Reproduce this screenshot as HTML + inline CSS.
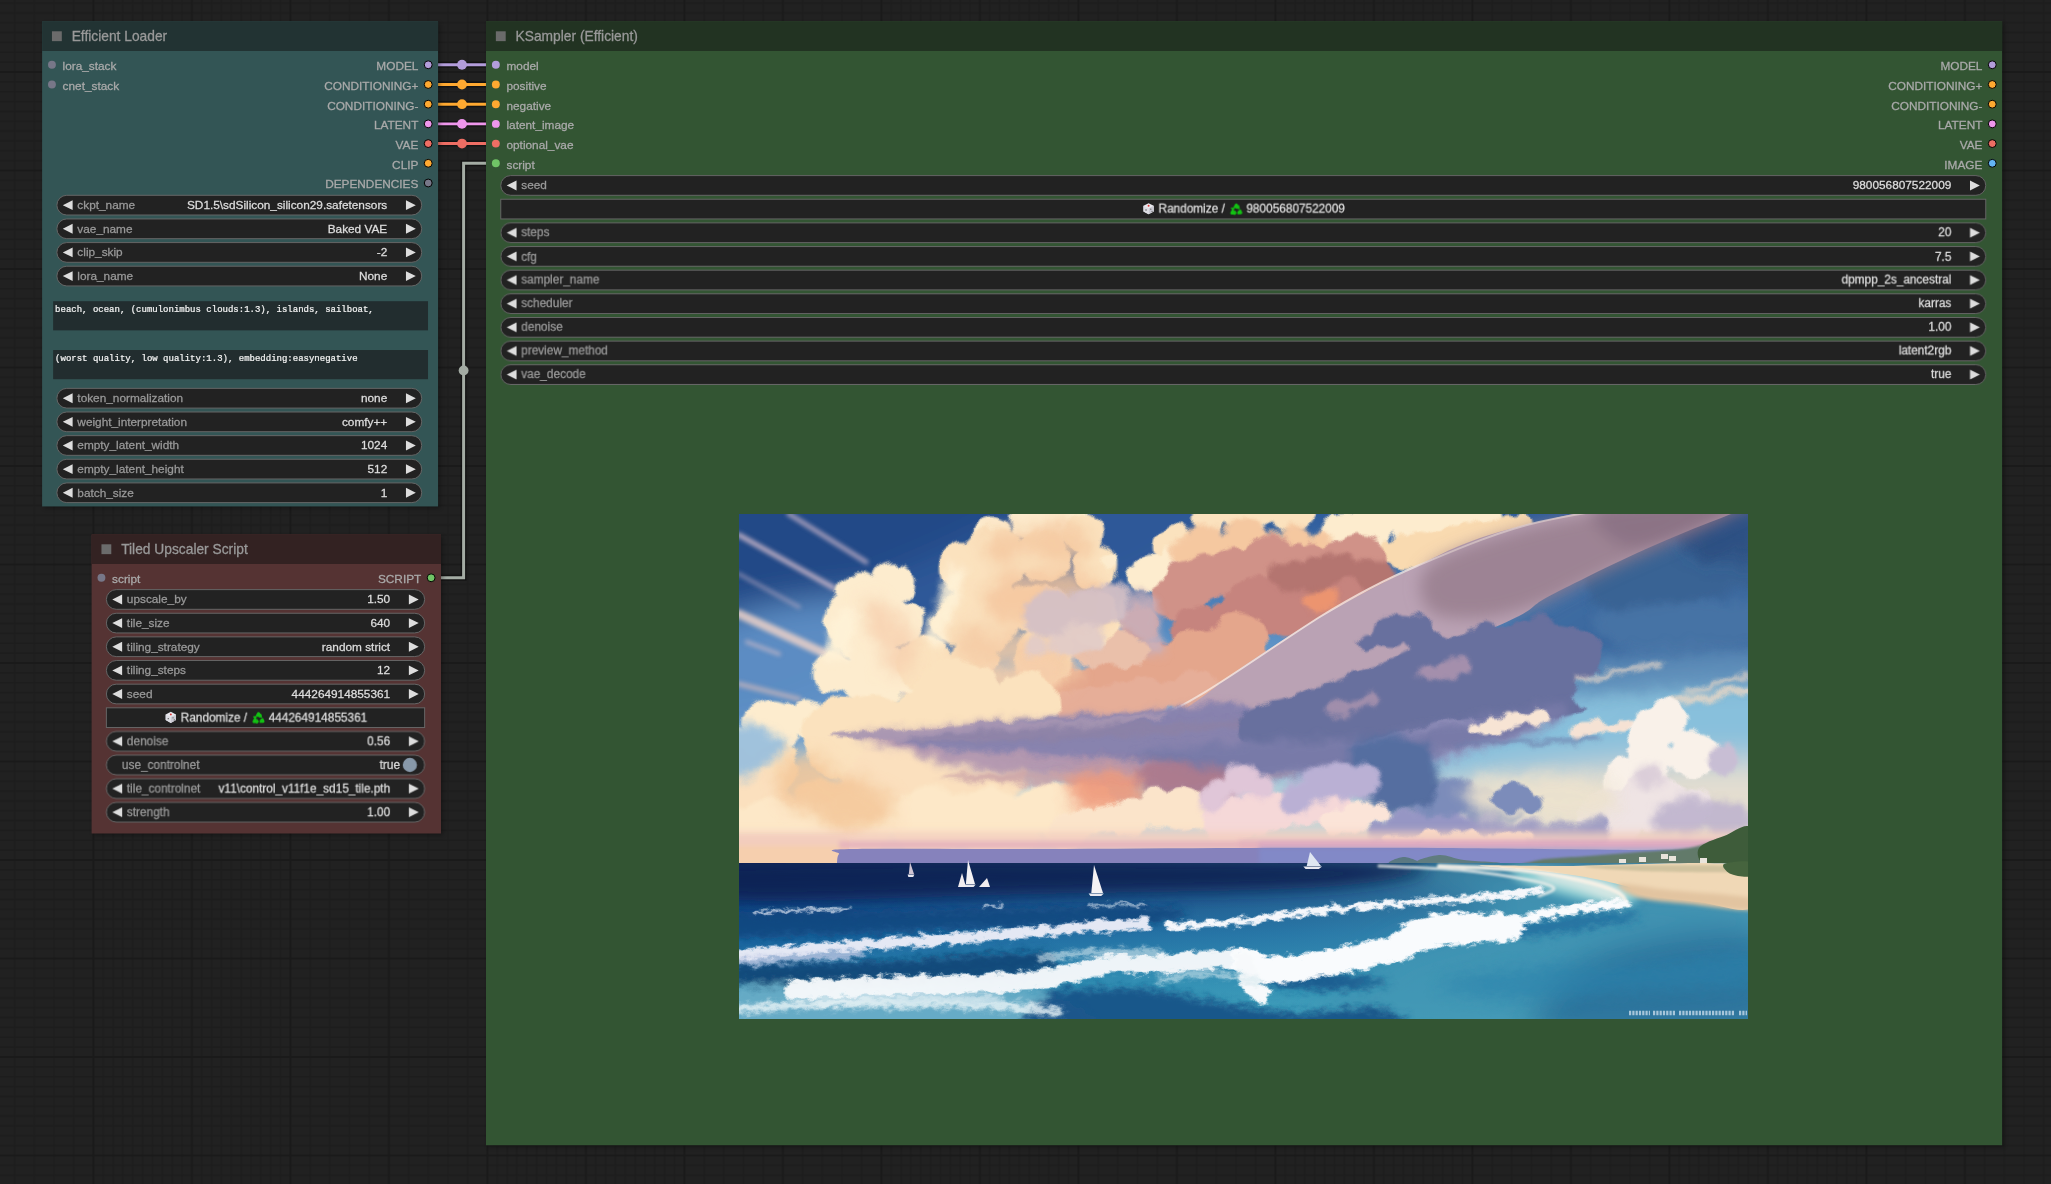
<!DOCTYPE html>
<html lang="en"><head><meta charset="utf-8"><title>ComfyUI - Efficiency Nodes workflow</title>
<style>html,body{margin:0;padding:0;background:#212121;overflow:hidden}svg{display:block;will-change:transform}text{font-family:"Liberation Sans", Arial, sans-serif}.mono{font-family:"Liberation Mono", "DejaVu Sans Mono", monospace}</style>
</head><body>
<svg width="2051" height="1184" viewBox="0 0 2051 1184">
<defs>
<pattern id="grid" width="394" height="98.5" patternUnits="userSpaceOnUse" x="93.4" y="72"><rect width="394" height="98.5" fill="#212121"/><path d="M9.85 0V98.5M19.70 0V98.5M29.55 0V98.5M39.40 0V98.5M49.25 0V98.5M59.10 0V98.5M68.95 0V98.5M78.80 0V98.5M88.65 0V98.5M108.35 0V98.5M118.20 0V98.5M128.05 0V98.5M137.90 0V98.5M147.75 0V98.5M157.60 0V98.5M167.45 0V98.5M177.30 0V98.5M187.15 0V98.5M216.70 0V98.5M236.40 0V98.5M256.10 0V98.5M275.80 0V98.5M315.20 0V98.5M334.90 0V98.5M354.60 0V98.5M374.30 0V98.5M0 9.85H394M0 19.70H394M0 29.55H394M0 39.40H394M0 49.25H394M0 59.10H394M0 68.95H394M0 78.80H394M0 88.65H394" stroke="#1d1d1d" stroke-width="1.6" fill="none"/><path d="M0 0V98.5M98.5 0V98.5M197 0V98.5M295.5 0V98.5M394 0V98.5M0 0H394M0 98.5H394" stroke="#1a1a1a" stroke-width="2" fill="none"/></pattern>
<filter id="sh" x="-5%" y="-5%" width="110%" height="110%"><feGaussianBlur stdDeviation="2"/></filter>
</defs>
<rect width="2051" height="1184" fill="url(#grid)"/>
<path d="M428 64.79L496 64.79" fill="none" stroke="#000" stroke-opacity="0.4" stroke-width="5.91" stroke-linejoin="miter"/><path d="M428 64.79L496 64.79" fill="none" stroke="#B39DDB" stroke-width="2.96" stroke-linejoin="miter"/><circle cx="462" cy="64.79" r="4.92" fill="#B39DDB"/>
<path d="M428 84.49L496 84.49" fill="none" stroke="#000" stroke-opacity="0.4" stroke-width="5.91" stroke-linejoin="miter"/><path d="M428 84.49L496 84.49" fill="none" stroke="#FFA931" stroke-width="2.96" stroke-linejoin="miter"/><circle cx="462" cy="84.49" r="4.92" fill="#FFA931"/>
<path d="M428 104.19L496 104.19" fill="none" stroke="#000" stroke-opacity="0.4" stroke-width="5.91" stroke-linejoin="miter"/><path d="M428 104.19L496 104.19" fill="none" stroke="#FFA931" stroke-width="2.96" stroke-linejoin="miter"/><circle cx="462" cy="104.19" r="4.92" fill="#FFA931"/>
<path d="M428 123.89L496 123.89" fill="none" stroke="#000" stroke-opacity="0.4" stroke-width="5.91" stroke-linejoin="miter"/><path d="M428 123.89L496 123.89" fill="none" stroke="#EE96EC" stroke-width="2.96" stroke-linejoin="miter"/><circle cx="462" cy="123.89" r="4.92" fill="#EE96EC"/>
<path d="M428 143.59L496 143.59" fill="none" stroke="#000" stroke-opacity="0.4" stroke-width="5.91" stroke-linejoin="miter"/><path d="M428 143.59L496 143.59" fill="none" stroke="#EE6E64" stroke-width="2.96" stroke-linejoin="miter"/><circle cx="462" cy="143.59" r="4.92" fill="#EE6E64"/>
<path d="M431 577.79L441 577.79L463.6 577.79L463.6 163.29L486 163.29L496 163.29" fill="none" stroke="#000" stroke-opacity="0.4" stroke-width="5.91" stroke-linejoin="miter"/><path d="M431 577.79L441 577.79L463.6 577.79L463.6 163.29L486 163.29L496 163.29" fill="none" stroke="#a4aca4" stroke-width="2.96" stroke-linejoin="miter"/><circle cx="463.6" cy="370.53999999999996" r="4.92" fill="#a4aca4"/>
<g transform="translate(42.1,51.0) scale(0.985)">
<rect x="0" y="-30" width="402" height="492.4" fill="#000" opacity="0.3" filter="url(#sh)" transform="translate(2,2)"/>
<rect x="0" y="-30" width="402" height="492.4" fill="#355"/>
<rect x="0" y="-30" width="402" height="30" fill="#233"/>
<rect x="10" y="-20" width="10" height="10" fill="#6b6b6b"/>
<text x="30" y="-10" font-size="14" fill="#999" stroke="#999" stroke-width="0.28">Efficient Loader</text>
<circle cx="10" cy="14.0" r="4" fill="#778"/>
<text x="20.8" y="19.4" font-size="12" fill="#AAA" stroke="#AAA" stroke-width="0.28">lora_stack</text>
<circle cx="10" cy="34.0" r="4" fill="#778"/>
<text x="20.8" y="39.4" font-size="12" fill="#AAA" stroke="#AAA" stroke-width="0.28">cnet_stack</text>
<circle cx="392" cy="14.0" r="4" fill="#B39DDB" stroke="#000" stroke-width="1"/>
<text x="382" y="19.4" font-size="12" fill="#AAA" text-anchor="end" stroke="#AAA" stroke-width="0.28">MODEL</text>
<circle cx="392" cy="34.0" r="4" fill="#FFA931" stroke="#000" stroke-width="1"/>
<text x="382" y="39.4" font-size="12" fill="#AAA" text-anchor="end" stroke="#AAA" stroke-width="0.28">CONDITIONING+</text>
<circle cx="392" cy="54.0" r="4" fill="#FFA931" stroke="#000" stroke-width="1"/>
<text x="382" y="59.4" font-size="12" fill="#AAA" text-anchor="end" stroke="#AAA" stroke-width="0.28">CONDITIONING-</text>
<circle cx="392" cy="74.0" r="4" fill="#EE96EC" stroke="#000" stroke-width="1"/>
<text x="382" y="79.4" font-size="12" fill="#AAA" text-anchor="end" stroke="#AAA" stroke-width="0.28">LATENT</text>
<circle cx="392" cy="94.0" r="4" fill="#EE6E64" stroke="#000" stroke-width="1"/>
<text x="382" y="99.4" font-size="12" fill="#AAA" text-anchor="end" stroke="#AAA" stroke-width="0.28">VAE</text>
<circle cx="392" cy="114.0" r="4" fill="#FFA931" stroke="#000" stroke-width="1"/>
<text x="382" y="119.4" font-size="12" fill="#AAA" text-anchor="end" stroke="#AAA" stroke-width="0.28">CLIP</text>
<circle cx="392" cy="134.0" r="4" fill="#778" stroke="#000" stroke-width="1"/>
<text x="382" y="139.4" font-size="12" fill="#AAA" text-anchor="end" stroke="#AAA" stroke-width="0.28">DEPENDENCIES</text>
<rect x="15" y="146.5" width="370.4" height="20" rx="10" ry="10" fill="#222" stroke="#666" stroke-width="1"/>
<path d="M31 151.5L21 156.5L31 161.5Z M369.4 151.5L379.4 156.5L369.4 161.5Z" fill="#DDD"/>
<text x="35.8" y="160.5" font-size="12" fill="#999" stroke="#999" stroke-width="0.28">ckpt_name</text>
<text x="350.4" y="160.5" font-size="12" fill="#DDD" text-anchor="end" stroke="#DDD" stroke-width="0.28">SD1.5\sdSilicon_silicon29.safetensors</text>
<rect x="15" y="170.5" width="370.4" height="20" rx="10" ry="10" fill="#222" stroke="#666" stroke-width="1"/>
<path d="M31 175.5L21 180.5L31 185.5Z M369.4 175.5L379.4 180.5L369.4 185.5Z" fill="#DDD"/>
<text x="35.8" y="184.5" font-size="12" fill="#999" stroke="#999" stroke-width="0.28">vae_name</text>
<text x="350.4" y="184.5" font-size="12" fill="#DDD" text-anchor="end" stroke="#DDD" stroke-width="0.28">Baked VAE</text>
<rect x="15" y="194.5" width="370.4" height="20" rx="10" ry="10" fill="#222" stroke="#666" stroke-width="1"/>
<path d="M31 199.5L21 204.5L31 209.5Z M369.4 199.5L379.4 204.5L369.4 209.5Z" fill="#DDD"/>
<text x="35.8" y="208.5" font-size="12" fill="#999" stroke="#999" stroke-width="0.28">clip_skip</text>
<text x="350.4" y="208.5" font-size="12" fill="#DDD" text-anchor="end" stroke="#DDD" stroke-width="0.28">-2</text>
<rect x="15" y="218.5" width="370.4" height="20" rx="10" ry="10" fill="#222" stroke="#666" stroke-width="1"/>
<path d="M31 223.5L21 228.5L31 233.5Z M369.4 223.5L379.4 228.5L369.4 233.5Z" fill="#DDD"/>
<text x="35.8" y="232.5" font-size="12" fill="#999" stroke="#999" stroke-width="0.28">lora_name</text>
<text x="350.4" y="232.5" font-size="12" fill="#DDD" text-anchor="end" stroke="#DDD" stroke-width="0.28">None</text>
<rect x="11.2" y="254" width="380.6" height="29.6" fill="#222d2f"/>
<text class="mono" x="13.2" y="264.9" font-size="9.15" fill="#f4f4f4" stroke="#f4f4f4" stroke-width="0.22" style="font-family:'Liberation Mono', 'DejaVu Sans Mono', monospace">beach, ocean, (cumulonimbus clouds:1.3), islands, sailboat,</text>
<rect x="11.2" y="303.6" width="380.6" height="29.6" fill="#222d2f"/>
<text class="mono" x="13.2" y="314.5" font-size="9.15" fill="#f4f4f4" stroke="#f4f4f4" stroke-width="0.22" style="font-family:'Liberation Mono', 'DejaVu Sans Mono', monospace">(worst quality, low quality:1.3), embedding:easynegative</text>
<rect x="15" y="342.5" width="370.4" height="20" rx="10" ry="10" fill="#222" stroke="#666" stroke-width="1"/>
<path d="M31 347.5L21 352.5L31 357.5Z M369.4 347.5L379.4 352.5L369.4 357.5Z" fill="#DDD"/>
<text x="35.8" y="356.5" font-size="12" fill="#999" stroke="#999" stroke-width="0.28">token_normalization</text>
<text x="350.4" y="356.5" font-size="12" fill="#DDD" text-anchor="end" stroke="#DDD" stroke-width="0.28">none</text>
<rect x="15" y="366.5" width="370.4" height="20" rx="10" ry="10" fill="#222" stroke="#666" stroke-width="1"/>
<path d="M31 371.5L21 376.5L31 381.5Z M369.4 371.5L379.4 376.5L369.4 381.5Z" fill="#DDD"/>
<text x="35.8" y="380.5" font-size="12" fill="#999" stroke="#999" stroke-width="0.28">weight_interpretation</text>
<text x="350.4" y="380.5" font-size="12" fill="#DDD" text-anchor="end" stroke="#DDD" stroke-width="0.28">comfy++</text>
<rect x="15" y="390.5" width="370.4" height="20" rx="10" ry="10" fill="#222" stroke="#666" stroke-width="1"/>
<path d="M31 395.5L21 400.5L31 405.5Z M369.4 395.5L379.4 400.5L369.4 405.5Z" fill="#DDD"/>
<text x="35.8" y="404.5" font-size="12" fill="#999" stroke="#999" stroke-width="0.28">empty_latent_width</text>
<text x="350.4" y="404.5" font-size="12" fill="#DDD" text-anchor="end" stroke="#DDD" stroke-width="0.28">1024</text>
<rect x="15" y="414.5" width="370.4" height="20" rx="10" ry="10" fill="#222" stroke="#666" stroke-width="1"/>
<path d="M31 419.5L21 424.5L31 429.5Z M369.4 419.5L379.4 424.5L369.4 429.5Z" fill="#DDD"/>
<text x="35.8" y="428.5" font-size="12" fill="#999" stroke="#999" stroke-width="0.28">empty_latent_height</text>
<text x="350.4" y="428.5" font-size="12" fill="#DDD" text-anchor="end" stroke="#DDD" stroke-width="0.28">512</text>
<rect x="15" y="438.5" width="370.4" height="20" rx="10" ry="10" fill="#222" stroke="#666" stroke-width="1"/>
<path d="M31 443.5L21 448.5L31 453.5Z M369.4 443.5L379.4 448.5L369.4 453.5Z" fill="#DDD"/>
<text x="35.8" y="452.5" font-size="12" fill="#999" stroke="#999" stroke-width="0.28">batch_size</text>
<text x="350.4" y="452.5" font-size="12" fill="#DDD" text-anchor="end" stroke="#DDD" stroke-width="0.28">1</text>
</g>
<g transform="translate(486.0,51.0) scale(0.985)">
<rect x="0" y="-30" width="1539.2" height="1140.9" fill="#000" opacity="0.3" filter="url(#sh)" transform="translate(2,2)"/>
<rect x="0" y="-30" width="1539.2" height="1140.9" fill="#353"/>
<rect x="0" y="-30" width="1539.2" height="30" fill="#232"/>
<rect x="10" y="-20" width="10" height="10" fill="#6b6b6b"/>
<text x="30" y="-10" font-size="14" fill="#999" stroke="#999" stroke-width="0.28">KSampler (Efficient)</text>
<circle cx="10" cy="14.0" r="4" fill="#B39DDB"/>
<text x="20.8" y="19.4" font-size="12" fill="#AAA" stroke="#AAA" stroke-width="0.28">model</text>
<circle cx="10" cy="34.0" r="4" fill="#FFA931"/>
<text x="20.8" y="39.4" font-size="12" fill="#AAA" stroke="#AAA" stroke-width="0.28">positive</text>
<circle cx="10" cy="54.0" r="4" fill="#FFA931"/>
<text x="20.8" y="59.4" font-size="12" fill="#AAA" stroke="#AAA" stroke-width="0.28">negative</text>
<circle cx="10" cy="74.0" r="4" fill="#EE96EC"/>
<text x="20.8" y="79.4" font-size="12" fill="#AAA" stroke="#AAA" stroke-width="0.28">latent_image</text>
<circle cx="10" cy="94.0" r="4" fill="#EE6E64"/>
<text x="20.8" y="99.4" font-size="12" fill="#AAA" stroke="#AAA" stroke-width="0.28">optional_vae</text>
<circle cx="10" cy="114.0" r="4" fill="#70c466"/>
<text x="20.8" y="119.4" font-size="12" fill="#AAA" stroke="#AAA" stroke-width="0.28">script</text>
<circle cx="1529.2" cy="14.0" r="4" fill="#B39DDB" stroke="#000" stroke-width="1"/>
<text x="1519.2" y="19.4" font-size="12" fill="#AAA" text-anchor="end" stroke="#AAA" stroke-width="0.28">MODEL</text>
<circle cx="1529.2" cy="34.0" r="4" fill="#FFA931" stroke="#000" stroke-width="1"/>
<text x="1519.2" y="39.4" font-size="12" fill="#AAA" text-anchor="end" stroke="#AAA" stroke-width="0.28">CONDITIONING+</text>
<circle cx="1529.2" cy="54.0" r="4" fill="#FFA931" stroke="#000" stroke-width="1"/>
<text x="1519.2" y="59.4" font-size="12" fill="#AAA" text-anchor="end" stroke="#AAA" stroke-width="0.28">CONDITIONING-</text>
<circle cx="1529.2" cy="74.0" r="4" fill="#EE96EC" stroke="#000" stroke-width="1"/>
<text x="1519.2" y="79.4" font-size="12" fill="#AAA" text-anchor="end" stroke="#AAA" stroke-width="0.28">LATENT</text>
<circle cx="1529.2" cy="94.0" r="4" fill="#EE6E64" stroke="#000" stroke-width="1"/>
<text x="1519.2" y="99.4" font-size="12" fill="#AAA" text-anchor="end" stroke="#AAA" stroke-width="0.28">VAE</text>
<circle cx="1529.2" cy="114.0" r="4" fill="#64B5F6" stroke="#000" stroke-width="1"/>
<text x="1519.2" y="119.4" font-size="12" fill="#AAA" text-anchor="end" stroke="#AAA" stroke-width="0.28">IMAGE</text>
<rect x="15" y="126.5" width="1507.6000000000001" height="20" rx="10" ry="10" fill="#222" stroke="#666" stroke-width="1"/>
<path d="M31 131.5L21 136.5L31 141.5Z M1506.6000000000001 131.5L1516.6000000000001 136.5L1506.6000000000001 141.5Z" fill="#DDD"/>
<text x="35.8" y="140.5" font-size="12" fill="#999" stroke="#999" stroke-width="0.28">seed</text>
<text x="1487.6000000000001" y="140.5" font-size="12" fill="#DDD" text-anchor="end" stroke="#DDD" stroke-width="0.28">980056807522009</text>
<rect x="15" y="150.5" width="1507.6000000000001" height="20" fill="#222" stroke="#666" stroke-width="1"/>
<g transform="translate(666.84,154.30) scale(0.9)"><path d="M6.5 0.3L12.3 3.2V9.6L6.5 12.8L0.7 9.6V3.2Z" fill="#e9e9ee"/><path d="M6.5 6.2L12.3 3.2V9.6L6.5 12.8Z" fill="#c9c9d2"/><path d="M6.5 6.2L0.7 3.2V9.6L6.5 12.8Z" fill="#dcdce3"/><circle cx="6.5" cy="3.2" r="1.1" fill="#d33"/><circle cx="3.6" cy="8" r="0.8" fill="#555"/><circle cx="9" cy="7" r="0.7" fill="#555"/><circle cx="10.4" cy="9.4" r="0.7" fill="#555"/></g>
<text x="682.78" y="164.5" font-size="12" fill="#DDD" stroke="#DDD" stroke-width="0.28">Randomize /</text>
<g transform="translate(755.52,153.80)" fill="none" stroke="#13c213" stroke-width="3" stroke-linejoin="round" stroke-linecap="butt"><path d="M4.6 5.4L6.2 2.4L8.2 5.6M9.4 7.6L10.8 10.4H7.4M5.2 10.6H1.6L3.2 7.6"/><path d="M8.6 2.8L9.6 6.6L6.4 5.8Z M4.6 8.2L6.4 10.6L4.4 12.6Z M0.8 5.6L4.4 5.2L3 8.2Z" fill="#13c213" stroke-width="0.6"/></g>
<text x="771.96" y="164.5" font-size="12" fill="#DDD" stroke="#DDD" stroke-width="0.28">980056807522009</text>
<rect x="15" y="174.5" width="1507.6000000000001" height="20" rx="10" ry="10" fill="#222" stroke="#666" stroke-width="1"/>
<path d="M31 179.5L21 184.5L31 189.5Z M1506.6000000000001 179.5L1516.6000000000001 184.5L1506.6000000000001 189.5Z" fill="#DDD"/>
<text x="35.8" y="188.5" font-size="12" fill="#999" stroke="#999" stroke-width="0.28">steps</text>
<text x="1487.6000000000001" y="188.5" font-size="12" fill="#DDD" text-anchor="end" stroke="#DDD" stroke-width="0.28">20</text>
<rect x="15" y="198.5" width="1507.6000000000001" height="20" rx="10" ry="10" fill="#222" stroke="#666" stroke-width="1"/>
<path d="M31 203.5L21 208.5L31 213.5Z M1506.6000000000001 203.5L1516.6000000000001 208.5L1506.6000000000001 213.5Z" fill="#DDD"/>
<text x="35.8" y="212.5" font-size="12" fill="#999" stroke="#999" stroke-width="0.28">cfg</text>
<text x="1487.6000000000001" y="212.5" font-size="12" fill="#DDD" text-anchor="end" stroke="#DDD" stroke-width="0.28">7.5</text>
<rect x="15" y="222.5" width="1507.6000000000001" height="20" rx="10" ry="10" fill="#222" stroke="#666" stroke-width="1"/>
<path d="M31 227.5L21 232.5L31 237.5Z M1506.6000000000001 227.5L1516.6000000000001 232.5L1506.6000000000001 237.5Z" fill="#DDD"/>
<text x="35.8" y="236.5" font-size="12" fill="#999" stroke="#999" stroke-width="0.28">sampler_name</text>
<text x="1487.6000000000001" y="236.5" font-size="12" fill="#DDD" text-anchor="end" stroke="#DDD" stroke-width="0.28">dpmpp_2s_ancestral</text>
<rect x="15" y="246.5" width="1507.6000000000001" height="20" rx="10" ry="10" fill="#222" stroke="#666" stroke-width="1"/>
<path d="M31 251.5L21 256.5L31 261.5Z M1506.6000000000001 251.5L1516.6000000000001 256.5L1506.6000000000001 261.5Z" fill="#DDD"/>
<text x="35.8" y="260.5" font-size="12" fill="#999" stroke="#999" stroke-width="0.28">scheduler</text>
<text x="1487.6000000000001" y="260.5" font-size="12" fill="#DDD" text-anchor="end" stroke="#DDD" stroke-width="0.28">karras</text>
<rect x="15" y="270.5" width="1507.6000000000001" height="20" rx="10" ry="10" fill="#222" stroke="#666" stroke-width="1"/>
<path d="M31 275.5L21 280.5L31 285.5Z M1506.6000000000001 275.5L1516.6000000000001 280.5L1506.6000000000001 285.5Z" fill="#DDD"/>
<text x="35.8" y="284.5" font-size="12" fill="#999" stroke="#999" stroke-width="0.28">denoise</text>
<text x="1487.6000000000001" y="284.5" font-size="12" fill="#DDD" text-anchor="end" stroke="#DDD" stroke-width="0.28">1.00</text>
<rect x="15" y="294.5" width="1507.6000000000001" height="20" rx="10" ry="10" fill="#222" stroke="#666" stroke-width="1"/>
<path d="M31 299.5L21 304.5L31 309.5Z M1506.6000000000001 299.5L1516.6000000000001 304.5L1506.6000000000001 309.5Z" fill="#DDD"/>
<text x="35.8" y="308.5" font-size="12" fill="#999" stroke="#999" stroke-width="0.28">preview_method</text>
<text x="1487.6000000000001" y="308.5" font-size="12" fill="#DDD" text-anchor="end" stroke="#DDD" stroke-width="0.28">latent2rgb</text>
<rect x="15" y="318.5" width="1507.6000000000001" height="20" rx="10" ry="10" fill="#222" stroke="#666" stroke-width="1"/>
<path d="M31 323.5L21 328.5L31 333.5Z M1506.6000000000001 323.5L1516.6000000000001 328.5L1506.6000000000001 333.5Z" fill="#DDD"/>
<text x="35.8" y="332.5" font-size="12" fill="#999" stroke="#999" stroke-width="0.28">vae_decode</text>
<text x="1487.6000000000001" y="332.5" font-size="12" fill="#DDD" text-anchor="end" stroke="#DDD" stroke-width="0.28">true</text>
</g>
<svg x="739" y="514" width="1009" height="505" viewBox="0 0 1009 505" preserveAspectRatio="none" overflow="hidden">
<defs>
<linearGradient id="sky" x1="0" y1="0" x2="0" y2="1">
<stop offset="0" stop-color="#2f5c9c"/><stop offset="0.35" stop-color="#5a8fc4"/><stop offset="0.7" stop-color="#9cc6dc"/><stop offset="1" stop-color="#e8ddd0"/>
</linearGradient>
<linearGradient id="sea" x1="0" y1="0" x2="0" y2="1">
<stop offset="0" stop-color="#0c2558"/><stop offset="0.2" stop-color="#103a7a"/><stop offset="0.45" stop-color="#175f9c"/><stop offset="0.75" stop-color="#2a86b0"/><stop offset="1" stop-color="#3fa0bd"/>
</linearGradient>
<linearGradient id="seaR" x1="0" y1="0" x2="1" y2="0">
<stop offset="0" stop-color="#4aa6bc" stop-opacity="0"/><stop offset="0.55" stop-color="#4aa6bc" stop-opacity="0.35"/><stop offset="1" stop-color="#55aabd" stop-opacity="0.8"/>
</linearGradient>
<filter id="b2" filterUnits="userSpaceOnUse" x="-80" y="-80" width="1170" height="670"><feGaussianBlur stdDeviation="2"/></filter>
<filter id="b4" filterUnits="userSpaceOnUse" x="-80" y="-80" width="1170" height="670"><feGaussianBlur stdDeviation="4"/></filter>
<filter id="b8" filterUnits="userSpaceOnUse" x="-80" y="-80" width="1170" height="670"><feGaussianBlur stdDeviation="8"/></filter>
<filter id="b16" filterUnits="userSpaceOnUse" x="-80" y="-80" width="1170" height="670"><feGaussianBlur stdDeviation="16"/></filter>
<filter id="rag" color-interpolation-filters="sRGB" filterUnits="userSpaceOnUse" x="-20" y="-20" width="1050" height="375"><feTurbulence type="fractalNoise" baseFrequency="0.045" numOctaves="3" seed="3" result="t"/><feDisplacementMap in="SourceGraphic" in2="t" scale="14" xChannelSelector="R" yChannelSelector="G"/></filter>
<filter id="rag2" color-interpolation-filters="sRGB" filterUnits="userSpaceOnUse" x="-20" y="190" width="1050" height="330"><feTurbulence type="fractalNoise" baseFrequency="0.09 0.16" numOctaves="3" seed="8" result="t"/><feDisplacementMap in="SourceGraphic" in2="t" scale="12" xChannelSelector="R" yChannelSelector="G"/></filter>
<filter id="b1" filterUnits="userSpaceOnUse" x="-80" y="-80" width="1170" height="670"><feGaussianBlur stdDeviation="1"/></filter>
</defs>
<rect width="1009" height="352" fill="url(#sky)"/>
<g filter="url(#b16)"><path d="M-40.0 -40.0C45.0 -80.0 391.7 -56.7 470.0 -40.0C548.3 -23.3 466.7 33.3 430.0 60.0C393.3 86.7 301.7 101.7 250.0 120.0C198.3 138.3 168.3 156.7 120.0 170.0C71.7 183.3 -13.3 235.0 -40.0 200.0C-66.7 165.0 -125.0 0.0 -40.0 -40.0Z" fill="#2d5898"/><path d="M-40.0 -40.0C16.7 -65.0 260.0 -53.3 300.0 -40.0C340.0 -26.7 256.7 15.0 200.0 40.0C143.3 65.0 0.0 123.3 -40.0 110.0C-80.0 96.7 -96.7 -15.0 -40.0 -40.0Z" fill="#244887"/><path d="M-40.0 120.0C-10.0 91.7 113.3 76.7 140.0 90.0C166.7 103.3 150.0 171.7 120.0 200.0C90.0 228.3 -13.3 273.3 -40.0 260.0C-66.7 246.7 -70.0 148.3 -40.0 120.0Z" fill="#6092c8" opacity="0.9"/><path d="M760.0 110.0C791.7 76.7 1001.7 -36.7 1050.0 -30.0C1098.3 -23.3 1081.7 116.7 1050.0 150.0C1018.3 183.3 908.3 176.7 860.0 170.0C811.7 163.3 728.3 143.3 760.0 110.0Z" fill="#3e6aa0"/><path d="M700.0 200.0C751.7 181.7 991.7 150.0 1050.0 160.0C1108.3 170.0 1101.7 241.7 1050.0 260.0C998.3 278.3 798.3 280.0 740.0 270.0C681.7 260.0 648.3 218.3 700.0 200.0Z" fill="#88c0dc"/><path d="M720.0 270.0C775.0 256.7 995.0 240.0 1050.0 250.0C1105.0 260.0 1105.0 316.7 1050.0 330.0C995.0 343.3 775.0 340.0 720.0 330.0C665.0 320.0 665.0 283.3 720.0 270.0Z" fill="#e4ded0"/></g>
<g filter="url(#b2)"><path d="M0 21L95 74" stroke="#d7becd" stroke-width="5" stroke-linecap="round" opacity="0.8"/><path d="M50 0L127 48" stroke="#c8b4c8" stroke-width="5" stroke-linecap="round" opacity="0.75"/><path d="M0 100L170 178" stroke="#ecd0c8" stroke-width="9" stroke-linecap="round" opacity="0.85"/><path d="M0 60L60 93" stroke="#c8b4c8" stroke-width="4" stroke-linecap="round" opacity="0.5"/><path d="M0 170L60 185" stroke="#e1beb9" stroke-width="5" stroke-linecap="round" opacity="0.6"/><path d="M8 128L40 140" stroke="#e1c3c8" stroke-width="4" stroke-linecap="round" opacity="0.6"/></g>
<g filter="url(#rag)">
<g filter="url(#b4)"><path d="M870.0 45.0C897.5 34.2 990.8 15.8 1015.0 20.0C1039.2 24.2 1034.2 57.5 1015.0 70.0C995.8 82.5 927.5 92.5 900.0 95.0C872.5 97.5 855.0 93.3 850.0 85.0C845.0 76.7 842.5 55.8 870.0 45.0Z" fill="#3a6294" opacity="0.95"/><path d="M860.0 100.0C879.2 91.7 989.2 83.3 1015.0 88.0C1040.8 92.7 1034.2 119.7 1015.0 128.0C995.8 136.3 925.8 142.7 900.0 138.0C874.2 133.3 840.8 108.3 860.0 100.0Z" fill="#4874a6" opacity="0.85"/></g>
<g filter="url(#b8)"><path d="M800.0 150.0C832.5 143.7 979.2 137.3 1015.0 140.0C1050.8 142.7 1047.5 159.7 1015.0 166.0C982.5 172.3 855.8 180.7 820.0 178.0C784.2 175.3 767.5 156.3 800.0 150.0Z" fill="#5c8ab8" opacity="0.7"/><path d="M930.0 -10.0C940.0 -19.2 1005.0 -18.3 1020.0 -10.0C1035.0 -1.7 1030.0 30.8 1020.0 40.0C1010.0 49.2 975.0 53.3 960.0 45.0C945.0 36.7 920.0 -0.8 930.0 -10.0Z" fill="#2d5082" opacity="0.9"/></g>
<g filter="url(#b1)"><g fill="#fbe2be"><circle cx="435.8" cy="31.8" r="21.0"/><circle cx="470.4" cy="6.4" r="16.8"/><circle cx="495.1" cy="-1.6" r="16.6"/><circle cx="514.8" cy="-4.9" r="22.9"/><circle cx="553.9" cy="-4.5" r="22.7"/></g><g fill="#fdecce"><circle cx="401.1" cy="66.0" r="14.5"/><circle cx="414.1" cy="59.3" r="19.0"/><circle cx="433.2" cy="46.1" r="12.3"/><circle cx="446.6" cy="43.3" r="13.5"/></g><g fill="#fdecce"><circle cx="606.5" cy="25.9" r="26.9"/><circle cx="628.6" cy="18.0" r="24.1"/><circle cx="645.2" cy="6.8" r="15.3"/><circle cx="674.2" cy="5.5" r="24.8"/><circle cx="699.5" cy="2.8" r="23.3"/><circle cx="722.2" cy="0.5" r="26.5"/><circle cx="740.3" cy="5.8" r="23.1"/></g><g fill="#f9dab0"><circle cx="618.4" cy="48.6" r="17.4"/><circle cx="634.4" cy="44.4" r="11.0"/><circle cx="649.9" cy="36.5" r="11.3"/><circle cx="667.0" cy="38.0" r="16.8"/><circle cx="678.6" cy="36.5" r="18.9"/><circle cx="695.6" cy="30.9" r="16.0"/><circle cx="713.3" cy="27.3" r="18.6"/><circle cx="721.7" cy="25.3" r="16.7"/><circle cx="743.7" cy="22.4" r="16.5"/><circle cx="754.1" cy="18.3" r="12.7"/><circle cx="769.7" cy="11.5" r="10.0"/><circle cx="781.7" cy="13.0" r="11.0"/></g></g>
<g fill="#f5c8a0" filter="url(#b2)"><circle cx="447.5" cy="38.9" r="14.8"/><circle cx="465.8" cy="36.8" r="25.2"/><circle cx="493.8" cy="37.9" r="20.7"/><circle cx="507.8" cy="31.2" r="25.1"/><circle cx="538.8" cy="35.6" r="18.0"/><circle cx="556.8" cy="27.3" r="15.1"/><circle cx="579.8" cy="35.9" r="16.3"/></g>
<g filter="url(#b1)"><g fill="#d09288"><circle cx="399.5" cy="109.1" r="18.3"/><circle cx="430.7" cy="85.0" r="20.0"/><circle cx="450.2" cy="71.3" r="24.9"/><circle cx="465.1" cy="64.4" r="24.7"/><circle cx="499.1" cy="58.3" r="26.3"/><circle cx="518.9" cy="45.6" r="20.3"/><circle cx="535.2" cy="43.9" r="24.1"/><circle cx="556.3" cy="45.6" r="17.5"/><circle cx="574.5" cy="42.2" r="15.1"/><circle cx="598.5" cy="43.8" r="15.9"/><circle cx="621.3" cy="48.1" r="27.8"/></g><g fill="#c6847e"><circle cx="418.0" cy="148.2" r="21.5"/><circle cx="444.5" cy="142.4" r="19.1"/><circle cx="459.8" cy="116.6" r="25.4"/><circle cx="488.0" cy="108.9" r="18.8"/><circle cx="515.6" cy="95.8" r="32.0"/><circle cx="550.4" cy="89.4" r="34.2"/><circle cx="573.9" cy="86.4" r="26.8"/><circle cx="614.7" cy="83.6" r="34.7"/></g></g>
<g fill="#b47470" filter="url(#b2)"><circle cx="539.1" cy="59.8" r="10.8"/><circle cx="552.2" cy="62.6" r="15.5"/><circle cx="562.2" cy="61.6" r="11.4"/><circle cx="578.3" cy="60.4" r="17.4"/><circle cx="589.6" cy="55.4" r="15.9"/><circle cx="599.1" cy="52.9" r="13.2"/><circle cx="611.1" cy="55.9" r="8.7"/><circle cx="628.0" cy="58.7" r="14.8"/><circle cx="640.7" cy="63.5" r="17.0"/></g>
<g filter="url(#b1)"><g fill="#e4a68c"><circle cx="326.9" cy="172.0" r="19.9"/><circle cx="351.7" cy="168.9" r="17.3"/><circle cx="383.7" cy="159.8" r="28.2"/><circle cx="408.3" cy="150.4" r="24.4"/><circle cx="434.5" cy="153.1" r="24.5"/><circle cx="454.8" cy="141.5" r="25.9"/><circle cx="478.2" cy="143.3" r="26.5"/><circle cx="498.9" cy="129.9" r="29.3"/></g><g fill="#e6ae98"><circle cx="301.8" cy="197.4" r="21.0"/><circle cx="312.2" cy="201.2" r="11.8"/><circle cx="327.2" cy="198.6" r="19.4"/><circle cx="346.3" cy="192.8" r="21.4"/><circle cx="357.0" cy="188.1" r="16.5"/><circle cx="376.2" cy="190.5" r="21.3"/><circle cx="389.5" cy="191.5" r="20.9"/><circle cx="402.7" cy="184.8" r="19.7"/><circle cx="417.9" cy="185.7" r="13.7"/><circle cx="434.4" cy="178.8" r="13.3"/><circle cx="448.8" cy="178.2" r="20.6"/><circle cx="468.2" cy="174.6" r="16.9"/></g></g>
<g filter="url(#b4)"><g fill="#cab0ba" opacity="0.9"><circle cx="400.0" cy="100.3" r="20.7"/><circle cx="405.1" cy="113.5" r="16.3"/><circle cx="414.0" cy="130.4" r="12.5"/></g><g fill="#d8c2c4" opacity="0.9"><circle cx="321.8" cy="141.8" r="12.3"/><circle cx="335.6" cy="133.1" r="16.6"/><circle cx="354.3" cy="122.8" r="16.6"/><circle cx="366.5" cy="117.2" r="16.7"/></g></g>
<g fill="#f0966e" filter="url(#b2)" opacity="0.9"><circle cx="575.0" cy="88.3" r="10.7"/><circle cx="585.2" cy="85.1" r="10.6"/><circle cx="591.7" cy="82.7" r="9.7"/></g>
</g>
<path d="M395.0 216.0C394.0 212.0 425.7 206.7 444.0 196.0C462.3 185.3 482.5 167.3 505.0 152.0C527.5 136.7 556.5 117.5 579.0 104.0C601.5 90.5 623.5 79.7 640.0 71.0C656.5 62.3 664.7 58.5 678.0 52.0C691.3 45.5 706.3 37.7 720.0 32.0C733.7 26.3 746.7 22.0 760.0 18.0C773.3 14.0 786.7 11.2 800.0 8.0C813.3 4.8 823.3 1.8 840.0 -1.0C856.7 -3.8 873.3 -6.5 900.0 -9.0C926.7 -11.5 980.7 -15.5 1000.0 -16.0C1019.3 -16.5 1017.3 -14.7 1016.0 -12.0C1014.7 -9.3 1003.2 -4.8 992.0 0.0C980.8 4.8 964.7 10.5 949.0 17.0C933.3 23.5 914.8 31.3 898.0 39.0C881.2 46.7 863.5 55.3 848.0 63.0C832.5 70.7 816.3 78.5 805.0 85.0C793.7 91.5 794.2 94.8 780.0 102.0C765.8 109.2 741.7 119.7 720.0 128.0C698.3 136.3 673.3 143.3 650.0 152.0C626.7 160.7 601.7 171.7 580.0 180.0C558.3 188.3 541.7 195.3 520.0 202.0C498.3 208.7 470.8 217.7 450.0 220.0C429.2 222.3 396.0 220.0 395.0 216.0Z" fill="#baa2b4" />
<path d="M410 208C470 180 500 155 579 104C610 85 640 68 678 52S760 17 800 8S860 -3 900 -9" fill="none" stroke="#f6e8e2" stroke-width="2" opacity="0.8"/>
<g filter="url(#b8)"><path d="M690.0 52.0C705.0 38.7 745.0 26.0 780.0 16.0C815.0 6.0 861.7 -3.0 900.0 -8.0C938.3 -13.0 1000.0 -18.0 1010.0 -14.0C1020.0 -10.0 983.3 4.3 960.0 16.0C936.7 27.7 896.7 43.7 870.0 56.0C843.3 68.3 821.7 82.0 800.0 90.0C778.3 98.0 758.3 103.0 740.0 104.0C721.7 105.0 698.3 104.7 690.0 96.0C681.7 87.3 675.0 65.3 690.0 52.0Z" fill="#967c8c" opacity="0.8"/><path d="M860.0 -10.0C882.0 -17.7 990.0 -18.0 1012.0 -16.0C1034.0 -14.0 1005.7 -5.3 992.0 2.0C978.3 9.3 948.7 23.3 930.0 28.0C911.3 32.7 891.7 36.3 880.0 30.0C868.3 23.7 838.0 -2.3 860.0 -10.0Z" fill="#846c80" opacity="0.7"/></g>
<g filter="url(#rag)">
<g filter="url(#b1)"><g fill="#fdecce"><circle cx="122.5" cy="83.3" r="23.8"/><circle cx="155.6" cy="69.1" r="20.7"/></g><g fill="#fdecce"><circle cx="116.7" cy="109.9" r="32.9"/><circle cx="146.8" cy="109.4" r="27.1"/><circle cx="166.1" cy="108.2" r="19.4"/></g><g fill="#fdecce"><circle cx="93.1" cy="158.6" r="21.0"/><circle cx="135.3" cy="161.0" r="33.6"/><circle cx="174.2" cy="157.4" r="22.7"/></g><g fill="#fdecce"><circle cx="253.6" cy="22.6" r="18.0"/><circle cx="288.4" cy="5.8" r="19.3"/><circle cx="312.9" cy="10.0" r="23.8"/><circle cx="330.2" cy="5.2" r="18.3"/></g><g fill="#fbe2be"><circle cx="224.7" cy="52.5" r="24.8"/><circle cx="256.3" cy="45.8" r="32.4"/><circle cx="304.3" cy="42.6" r="26.8"/></g><g fill="#fbe2be"><circle cx="345.1" cy="18.3" r="18.5"/><circle cx="356.5" cy="52.0" r="22.8"/></g><g fill="#fdecce"><circle cx="370.6" cy="47.2" r="8.7"/></g><g fill="#eac0aa"><circle cx="328.0" cy="124.9" r="20.3"/><circle cx="349.5" cy="135.7" r="16.1"/><circle cx="359.0" cy="141.6" r="14.1"/><circle cx="381.7" cy="135.5" r="17.8"/><circle cx="399.6" cy="139.4" r="11.7"/></g><g fill="#fbe2be"><circle cx="216.0" cy="107.2" r="22.4"/><circle cx="244.3" cy="100.7" r="38.8"/><circle cx="286.8" cy="94.3" r="22.3"/><circle cx="311.8" cy="101.8" r="28.4"/><circle cx="355.1" cy="105.4" r="26.8"/></g><g fill="#fbe2be"><circle cx="186.4" cy="149.2" r="27.8"/><circle cx="235.9" cy="141.8" r="23.3"/><circle cx="305.4" cy="141.4" r="29.4"/></g></g>
<g filter="url(#b8)"><g fill="#f5c8a0" opacity="0.85"><circle cx="263.1" cy="33.6" r="18.0"/><circle cx="286.3" cy="28.1" r="11.9"/><circle cx="311.5" cy="27.2" r="20.9"/><circle cx="333.9" cy="31.5" r="17.7"/></g><g fill="#f5c69e" opacity="0.85"><circle cx="272.3" cy="84.9" r="26.9"/><circle cx="295.8" cy="82.6" r="27.2"/><circle cx="326.3" cy="78.3" r="24.9"/><circle cx="343.3" cy="89.0" r="27.1"/></g><g fill="#f5caa4" opacity="0.85"><circle cx="235.3" cy="130.1" r="20.5"/><circle cx="254.3" cy="140.1" r="16.3"/><circle cx="277.3" cy="135.4" r="18.2"/><circle cx="310.1" cy="149.4" r="27.3"/></g><g fill="#f7d0b0" opacity="0.85"><circle cx="134.9" cy="98.3" r="13.6"/><circle cx="146.3" cy="112.1" r="15.5"/><circle cx="164.7" cy="128.8" r="13.3"/><circle cx="159.0" cy="143.7" r="16.5"/></g></g>
<g filter="url(#b4)"><g fill="#fef2d8" opacity="0.9"><circle cx="215.1" cy="62.0" r="10.4"/><circle cx="212.5" cy="76.7" r="11.0"/><circle cx="209.4" cy="85.4" r="9.5"/><circle cx="203.5" cy="99.4" r="10.0"/><circle cx="198.1" cy="110.5" r="8.2"/><circle cx="196.5" cy="123.5" r="9.8"/></g><g fill="#fef2d8" opacity="0.9"><circle cx="106.8" cy="106.1" r="11.8"/><circle cx="102.9" cy="114.1" r="12.7"/><circle cx="99.2" cy="126.1" r="13.4"/><circle cx="96.2" cy="136.7" r="11.0"/></g></g>
<g filter="url(#b2)"><g fill="#d4c0c6" opacity="0.95"><circle cx="306.1" cy="102.0" r="21.7"/><circle cx="316.9" cy="96.2" r="20.7"/><circle cx="337.8" cy="94.6" r="17.1"/><circle cx="353.2" cy="94.3" r="20.9"/><circle cx="371.6" cy="87.7" r="19.2"/></g><g fill="#e2ccc8" opacity="0.95"><circle cx="297.1" cy="133.9" r="10.7"/><circle cx="320.2" cy="130.5" r="11.6"/><circle cx="336.0" cy="126.4" r="17.4"/><circle cx="348.5" cy="124.9" r="15.9"/></g></g>
<g fill="#f6ceaa" filter="url(#b4)" opacity="0.9"><circle cx="250.0" cy="170.2" r="16.4"/><circle cx="260.3" cy="168.3" r="15.6"/><circle cx="273.7" cy="161.7" r="11.6"/><circle cx="287.9" cy="161.7" r="16.2"/><circle cx="305.0" cy="161.7" r="18.7"/></g>
<g filter="url(#b1)"><g fill="#fdecce"><circle cx="-7.6" cy="235.5" r="25.6"/><circle cx="31.9" cy="212.5" r="28.1"/><circle cx="66.8" cy="205.2" r="19.6"/></g><g fill="#fbe2be"><circle cx="-8.8" cy="263.2" r="31.1"/><circle cx="35.8" cy="253.1" r="24.9"/><circle cx="103.2" cy="224.2" r="40.8"/><circle cx="134.4" cy="217.4" r="36.4"/><circle cx="177.1" cy="202.6" r="26.4"/><circle cx="217.9" cy="193.3" r="48.0"/><circle cx="255.8" cy="204.4" r="35.0"/><circle cx="285.8" cy="191.8" r="34.7"/></g></g>
<g filter="url(#b2)"><g fill="#fbe0be"><circle cx="14.8" cy="306.5" r="47.2"/><circle cx="80.4" cy="293.1" r="27.0"/><circle cx="120.8" cy="279.7" r="26.7"/><circle cx="153.7" cy="269.2" r="45.7"/><circle cx="189.8" cy="259.4" r="46.0"/><circle cx="229.9" cy="261.1" r="23.5"/><circle cx="258.5" cy="254.2" r="31.0"/></g><g fill="#fde8c8"><circle cx="-5.6" cy="315.5" r="22.7"/><circle cx="29.4" cy="314.6" r="30.6"/><circle cx="62.8" cy="322.2" r="33.8"/><circle cx="85.0" cy="313.9" r="22.2"/><circle cx="114.5" cy="311.9" r="35.1"/><circle cx="137.1" cy="306.1" r="24.7"/><circle cx="171.0" cy="307.2" r="18.8"/><circle cx="190.1" cy="305.0" r="33.9"/><circle cx="216.0" cy="304.4" r="26.2"/><circle cx="251.7" cy="308.1" r="34.3"/><circle cx="278.7" cy="307.7" r="28.4"/><circle cx="302.9" cy="294.1" r="26.9"/><circle cx="326.0" cy="303.3" r="30.2"/><circle cx="350.6" cy="294.1" r="28.6"/></g></g>
<g filter="url(#b8)"><g fill="#f4c698" opacity="0.85"><circle cx="65.9" cy="267.7" r="28.6"/><circle cx="87.8" cy="280.6" r="19.6"/><circle cx="107.4" cy="289.7" r="29.3"/><circle cx="135.6" cy="293.8" r="18.9"/></g><g fill="#f6cea2" opacity="0.85"><circle cx="257.6" cy="234.0" r="10.7"/><circle cx="275.0" cy="236.5" r="18.0"/><circle cx="293.5" cy="240.6" r="18.0"/><circle cx="302.8" cy="240.6" r="10.5"/><circle cx="317.1" cy="244.2" r="12.5"/><circle cx="335.5" cy="249.7" r="11.6"/><circle cx="349.4" cy="247.4" r="16.4"/><circle cx="364.1" cy="247.9" r="14.2"/></g></g>
<g filter="url(#b4)"><path d="M-10.0 215.0C-5.0 206.7 10.8 209.8 20.0 212.0C29.2 214.2 43.3 221.7 45.0 228.0C46.7 234.3 39.2 244.3 30.0 250.0C20.8 255.7 -3.3 267.8 -10.0 262.0C-16.7 256.2 -15.0 223.3 -10.0 215.0Z" fill="#96bede" opacity="0.9"/><path d="M330.0 228.0C336.7 222.2 388.3 219.7 420.0 215.0C451.7 210.3 483.3 207.5 520.0 200.0C556.7 192.5 600.0 176.7 640.0 170.0C680.0 163.3 728.3 158.3 760.0 160.0C791.7 161.7 823.3 170.8 830.0 180.0C836.7 189.2 821.7 204.2 800.0 215.0C778.3 225.8 733.3 237.2 700.0 245.0C666.7 252.8 636.7 259.2 600.0 262.0C563.3 264.8 516.7 264.0 480.0 262.0C443.3 260.0 405.0 255.7 380.0 250.0C355.0 244.3 323.3 233.8 330.0 228.0Z" fill="#9894be"/><path d="M240.0 232.0C240.0 226.2 298.3 219.5 330.0 215.0C361.7 210.5 398.3 207.5 430.0 205.0C461.7 202.5 505.0 195.0 520.0 200.0C535.0 205.0 535.0 226.7 520.0 235.0C505.0 243.3 461.7 247.5 430.0 250.0C398.3 252.5 361.7 253.0 330.0 250.0C298.3 247.0 240.0 237.8 240.0 232.0Z" fill="#c6a2b2"/><path d="M150.0 232.0C165.3 237.2 187.8 246.2 212.0 251.0C236.2 255.8 264.7 258.2 295.0 261.0C325.3 263.8 359.8 266.2 394.0 268.0C428.2 269.8 482.3 284.0 500.0 272.0C517.7 260.0 517.7 208.2 500.0 196.0C482.3 183.8 436.3 196.8 394.0 199.0C351.7 201.2 291.7 205.5 246.0 209.0C200.3 212.5 136.0 216.2 120.0 220.0C104.0 223.8 134.7 226.8 150.0 232.0Z" fill="#b096b0" opacity="0.95"/></g>
<path d="M160.0 226.0C165.7 221.7 207.0 214.5 246.0 210.0C285.0 205.5 350.0 201.7 394.0 199.0C438.0 196.3 490.7 186.2 510.0 194.0C529.3 201.8 529.3 237.3 510.0 246.0C490.7 254.7 429.8 247.0 394.0 246.0C358.2 245.0 325.3 241.7 295.0 240.0C264.7 238.3 234.5 238.3 212.0 236.0C189.5 233.7 154.3 230.3 160.0 226.0Z" fill="#8682ae" filter="url(#b2)" opacity="0.95"/>
<path d="M90.0 221.0C90.0 218.5 160.0 214.5 200.0 212.0C240.0 209.5 291.7 208.0 330.0 206.0C368.3 204.0 430.0 197.7 430.0 200.0C430.0 202.3 368.3 215.5 330.0 220.0C291.7 224.5 240.0 226.8 200.0 227.0C160.0 227.2 90.0 223.5 90.0 221.0Z" fill="#a896b2" filter="url(#b1)" opacity="0.9"/>
<g filter="url(#b2)"><path d="M160.0 226.0C160.0 223.8 250.0 217.3 300.0 214.0C350.0 210.7 416.7 208.3 460.0 206.0C503.3 203.7 560.0 198.2 560.0 200.0C560.0 201.8 503.3 212.5 460.0 217.0C416.7 221.5 350.0 225.5 300.0 227.0C250.0 228.5 160.0 228.2 160.0 226.0Z" fill="#8c82a6" opacity="0.9"/><path d="M200.0 262.0C205.0 259.8 283.3 257.8 330.0 257.0C376.7 256.2 441.7 256.2 480.0 257.0C518.3 257.8 568.3 259.8 560.0 262.0C551.7 264.2 473.3 268.7 430.0 270.0C386.7 271.3 338.3 271.3 300.0 270.0C261.7 268.7 195.0 264.2 200.0 262.0Z" fill="#c8a0a6" opacity="0.8"/></g>
<g filter="url(#b1)"><path d="M505.0 200.0C514.2 191.7 537.5 188.3 560.0 180.0C582.5 171.7 616.7 159.2 640.0 150.0C663.3 140.8 676.7 131.3 700.0 125.0C723.3 118.7 755.0 113.2 780.0 112.0C805.0 110.8 836.3 111.7 850.0 118.0C863.7 124.3 865.3 140.5 862.0 150.0C858.7 159.5 832.8 167.3 830.0 175.0C827.2 182.7 850.0 191.0 845.0 196.0C840.0 201.0 820.8 203.5 800.0 205.0C779.2 206.5 746.7 201.7 720.0 205.0C693.3 208.3 666.7 220.0 640.0 225.0C613.3 230.0 582.5 234.2 560.0 235.0C537.5 235.8 514.2 235.8 505.0 230.0C495.8 224.2 495.8 208.3 505.0 200.0Z" fill="#68709e"/><g fill="#68709e"><circle cx="628.6" cy="128.0" r="9.0"/><circle cx="641.7" cy="122.5" r="9.6"/><circle cx="651.5" cy="116.8" r="16.3"/><circle cx="664.3" cy="114.6" r="10.7"/><circle cx="678.9" cy="118.4" r="17.1"/><circle cx="685.3" cy="118.4" r="8.6"/></g><g fill="#68709e"><circle cx="699.8" cy="140.7" r="21.7"/><circle cx="715.7" cy="138.6" r="11.1"/><circle cx="736.4" cy="134.0" r="20.9"/><circle cx="746.7" cy="122.1" r="14.0"/><circle cx="768.2" cy="127.8" r="17.3"/><circle cx="784.6" cy="125.3" r="19.6"/><circle cx="800.4" cy="118.1" r="16.5"/><circle cx="817.7" cy="132.1" r="20.4"/></g><g fill="#68709e"><circle cx="758.7" cy="162.6" r="14.3"/><circle cx="774.2" cy="164.6" r="10.7"/><circle cx="783.9" cy="161.8" r="9.5"/><circle cx="799.3" cy="158.2" r="13.8"/><circle cx="808.5" cy="163.7" r="13.9"/><circle cx="826.3" cy="170.9" r="12.6"/></g></g>
<g filter="url(#b4)"><path d="M400.0 240.0C406.7 234.3 480.0 231.0 520.0 228.0C560.0 225.0 600.0 226.7 640.0 222.0C680.0 217.3 728.3 205.3 760.0 200.0C791.7 194.7 823.3 187.5 830.0 190.0C836.7 192.5 821.7 206.7 800.0 215.0C778.3 223.3 733.3 232.8 700.0 240.0C666.7 247.2 636.7 254.3 600.0 258.0C563.3 261.7 513.3 265.0 480.0 262.0C446.7 259.0 393.3 245.7 400.0 240.0Z" fill="#787aa8"/><path d="M611.0 232.0C616.8 224.0 636.8 222.0 650.0 222.0C663.2 222.0 681.7 225.3 690.0 232.0C698.3 238.7 695.8 252.3 700.0 262.0C704.2 271.7 716.7 283.7 715.0 290.0C713.3 296.3 702.5 299.0 690.0 300.0C677.5 301.0 652.5 301.0 640.0 296.0C627.5 291.0 619.8 280.7 615.0 270.0C610.2 259.3 605.2 240.0 611.0 232.0Z" fill="#546ea0"/></g>
<path d="M330.0 262.0C339.2 255.7 388.3 253.0 400.0 258.0C411.7 263.0 409.2 285.7 400.0 292.0C390.8 298.3 356.7 301.0 345.0 296.0C333.3 291.0 320.8 268.3 330.0 262.0Z" fill="#ee987a" filter="url(#b8)" opacity="0.9"/>
<path d="M400.0 250.0C410.0 244.2 463.3 250.0 480.0 255.0C496.7 260.0 501.7 272.5 500.0 280.0C498.3 287.5 483.3 298.3 470.0 300.0C456.7 301.7 431.7 298.3 420.0 290.0C408.3 281.7 390.0 255.8 400.0 250.0Z" fill="#aa788c" filter="url(#b4)" opacity="0.9"/>
<g filter="url(#b2)"><g fill="#b096b0" opacity="0.85"><circle cx="689.9" cy="158.9" r="10.1"/><circle cx="699.8" cy="159.2" r="6.6"/><circle cx="704.1" cy="156.8" r="6.9"/><circle cx="713.7" cy="154.2" r="9.0"/><circle cx="723.7" cy="152.5" r="8.9"/></g><g fill="#b096b0" opacity="0.8"><circle cx="589.5" cy="195.8" r="4.0"/><circle cx="594.6" cy="195.8" r="6.8"/><circle cx="601.1" cy="192.9" r="7.0"/><circle cx="606.1" cy="193.6" r="8.0"/><circle cx="611.4" cy="192.3" r="4.9"/><circle cx="619.1" cy="190.4" r="5.1"/><circle cx="622.5" cy="189.1" r="4.7"/><circle cx="630.2" cy="187.2" r="6.7"/><circle cx="633.6" cy="188.5" r="5.6"/></g></g>
<g filter="url(#b1)"><g fill="#f7e4d4"><circle cx="733.2" cy="212.2" r="6.0"/><circle cx="745.3" cy="213.5" r="7.4"/><circle cx="754.5" cy="211.7" r="9.3"/><circle cx="760.0" cy="209.7" r="7.0"/><circle cx="768.1" cy="206.7" r="9.4"/><circle cx="777.5" cy="204.9" r="7.3"/><circle cx="784.0" cy="204.3" r="6.1"/><circle cx="795.8" cy="203.3" r="7.2"/><circle cx="800.8" cy="203.8" r="10.6"/></g><g fill="#f5e2d4"><circle cx="836.0" cy="217.8" r="7.4"/><circle cx="840.8" cy="216.6" r="4.1"/><circle cx="845.7" cy="215.6" r="7.8"/><circle cx="851.1" cy="214.7" r="7.7"/><circle cx="859.1" cy="212.6" r="7.3"/><circle cx="862.9" cy="214.3" r="4.0"/><circle cx="870.7" cy="213.2" r="5.0"/><circle cx="875.6" cy="213.4" r="5.3"/><circle cx="881.8" cy="212.6" r="6.5"/><circle cx="888.1" cy="210.5" r="5.2"/></g></g>
<g filter="url(#b2)"><path d="M720 231L860 225" stroke="#6e7daa" stroke-width="4" stroke-linecap="round" opacity="0.8"/><path d="M840 165L920 150" stroke="#ecd8c8" stroke-width="5" stroke-linecap="round" opacity="0.8"/><path d="M930 190L1009 175" stroke="#edd7c5" stroke-width="7" stroke-linecap="round" opacity="0.85"/><path d="M950 178L1009 160" stroke="#edd7c5" stroke-width="5" stroke-linecap="round" opacity="0.75"/></g>
<g filter="url(#b1)"><g fill="#f9f1e9"><circle cx="908.5" cy="216.1" r="20.0"/><circle cx="926.0" cy="207.7" r="22.3"/></g><g fill="#f9f1e9"><circle cx="887.5" cy="267.4" r="23.6"/><circle cx="912.0" cy="244.2" r="22.1"/><circle cx="955.1" cy="241.2" r="23.9"/></g><g fill="#efe4e4"><circle cx="871.1" cy="304.2" r="31.5"/><circle cx="911.4" cy="287.8" r="31.0"/><circle cx="933.2" cy="293.7" r="22.7"/><circle cx="956.1" cy="293.3" r="18.3"/></g></g>
<g fill="#c8bed4" filter="url(#b2)"><circle cx="984.1" cy="245.8" r="14.8"/></g>
<g filter="url(#b4)"><g fill="#beb4ce" opacity="0.9"><circle cx="928.6" cy="305.8" r="16.6"/><circle cx="950.6" cy="301.5" r="20.3"/><circle cx="960.1" cy="304.7" r="11.3"/><circle cx="979.6" cy="303.9" r="18.3"/><circle cx="997.0" cy="304.4" r="15.1"/></g><g fill="#d6c8d6" opacity="0.8"><circle cx="906.7" cy="262.8" r="11.7"/><circle cx="919.2" cy="264.0" r="7.3"/></g></g>
<g filter="url(#b1)"><g fill="#fbe4ca"><circle cx="328.9" cy="317.1" r="18.8"/><circle cx="344.4" cy="307.7" r="14.2"/><circle cx="366.8" cy="305.7" r="13.6"/><circle cx="379.1" cy="304.4" r="15.8"/><circle cx="394.2" cy="301.1" r="18.1"/><circle cx="417.8" cy="293.1" r="19.9"/><circle cx="432.9" cy="298.1" r="17.7"/><circle cx="442.5" cy="294.8" r="23.2"/><circle cx="460.5" cy="302.6" r="13.2"/></g><g fill="#f5d8d8"><circle cx="483.9" cy="308.9" r="19.0"/><circle cx="496.2" cy="304.5" r="22.6"/><circle cx="517.3" cy="299.8" r="21.5"/><circle cx="531.1" cy="297.5" r="19.2"/><circle cx="543.4" cy="296.0" r="16.3"/><circle cx="564.2" cy="298.7" r="14.9"/><circle cx="575.6" cy="294.4" r="14.3"/><circle cx="597.2" cy="296.3" r="20.2"/></g></g>
<g filter="url(#b2)"><g fill="#e0c6d8"><circle cx="472.4" cy="285.4" r="12.7"/><circle cx="481.8" cy="276.7" r="11.1"/><circle cx="501.1" cy="266.7" r="16.6"/><circle cx="521.6" cy="271.8" r="12.2"/></g><g fill="#bab0d4"><circle cx="558.1" cy="284.5" r="17.0"/><circle cx="580.7" cy="269.6" r="17.4"/><circle cx="603.6" cy="267.0" r="18.8"/><circle cx="622.0" cy="267.3" r="18.1"/></g><g fill="#7c8cba"><circle cx="686.0" cy="303.2" r="12.7"/><circle cx="707.6" cy="291.7" r="15.1"/><circle cx="719.7" cy="282.3" r="20.3"/><circle cx="735.4" cy="289.6" r="10.6"/><circle cx="746.7" cy="293.0" r="20.6"/><circle cx="770.0" cy="293.2" r="14.6"/></g><g fill="#9696c4"><circle cx="640.1" cy="317.6" r="10.2"/><circle cx="651.9" cy="316.2" r="8.7"/><circle cx="662.2" cy="311.6" r="15.9"/><circle cx="678.9" cy="313.1" r="15.7"/><circle cx="690.6" cy="311.9" r="8.2"/><circle cx="700.7" cy="313.9" r="15.4"/><circle cx="713.7" cy="310.9" r="9.1"/><circle cx="726.1" cy="315.2" r="11.2"/><circle cx="734.3" cy="313.2" r="9.3"/><circle cx="747.3" cy="312.1" r="12.2"/><circle cx="761.3" cy="317.4" r="9.9"/><circle cx="772.4" cy="317.1" r="8.1"/><circle cx="786.0" cy="313.9" r="8.1"/><circle cx="796.3" cy="317.6" r="12.8"/><circle cx="807.5" cy="317.9" r="10.4"/><circle cx="821.0" cy="317.7" r="11.4"/><circle cx="829.6" cy="318.7" r="11.5"/><circle cx="843.4" cy="319.6" r="11.9"/><circle cx="857.2" cy="316.1" r="14.4"/></g></g>
<g filter="url(#b1)"><g fill="#fbe4d8"><circle cx="597.2" cy="307.4" r="13.7"/><circle cx="610.5" cy="304.9" r="13.3"/><circle cx="623.5" cy="301.6" r="14.1"/><circle cx="641.6" cy="297.9" r="9.9"/></g><g fill="#fbdeca"><circle cx="648.9" cy="325.0" r="5.0"/><circle cx="655.7" cy="324.0" r="4.6"/><circle cx="660.3" cy="325.4" r="6.2"/><circle cx="662.9" cy="325.9" r="6.1"/><circle cx="669.3" cy="325.7" r="5.0"/><circle cx="673.4" cy="325.6" r="3.8"/><circle cx="676.9" cy="325.1" r="3.5"/><circle cx="682.8" cy="323.8" r="3.8"/><circle cx="685.5" cy="324.3" r="6.1"/><circle cx="690.2" cy="323.6" r="6.5"/><circle cx="695.0" cy="322.9" r="5.0"/><circle cx="699.2" cy="325.1" r="3.9"/><circle cx="705.6" cy="323.2" r="5.6"/><circle cx="708.3" cy="324.2" r="6.0"/><circle cx="713.5" cy="325.2" r="5.5"/><circle cx="718.7" cy="325.3" r="5.2"/><circle cx="724.3" cy="324.7" r="3.6"/><circle cx="728.4" cy="323.9" r="4.6"/><circle cx="732.5" cy="324.2" r="6.7"/><circle cx="736.8" cy="323.8" r="5.9"/><circle cx="740.4" cy="325.5" r="5.9"/><circle cx="746.5" cy="326.0" r="4.1"/><circle cx="751.2" cy="324.4" r="5.3"/><circle cx="754.2" cy="324.0" r="3.3"/><circle cx="759.8" cy="325.0" r="5.4"/><circle cx="764.1" cy="324.2" r="6.4"/><circle cx="768.8" cy="323.5" r="5.5"/><circle cx="774.0" cy="324.3" r="4.5"/><circle cx="780.2" cy="324.7" r="4.0"/><circle cx="785.3" cy="324.3" r="4.0"/><circle cx="791.1" cy="323.6" r="3.7"/><circle cx="794.0" cy="324.5" r="3.8"/></g></g>
<path d="M730.0 268.0C740.0 261.7 776.7 261.7 800.0 262.0C823.3 262.3 858.3 263.7 870.0 270.0C881.7 276.3 881.7 294.0 870.0 300.0C858.3 306.0 821.7 306.0 800.0 306.0C778.3 306.0 751.7 306.3 740.0 300.0C728.3 293.7 720.0 274.3 730.0 268.0Z" fill="#ece2ce" filter="url(#b8)" opacity="0.9"/>
<g fill="#7c8cba" filter="url(#b1)"><circle cx="766.6" cy="284.5" r="13.9"/><circle cx="772.3" cy="275.8" r="9.2"/><circle cx="781.7" cy="283.3" r="11.5"/><circle cx="792.4" cy="291.3" r="10.6"/></g>
</g>
<rect x="-20" y="318" width="1050" height="16" fill="#f3cfc0" filter="url(#b4)" opacity="0.9"/>
<rect x="0" y="326" width="110" height="26" fill="#f6cfae"/>
<g filter="url(#b2)"><rect x="-20" y="322" width="130" height="10" fill="#f3cdbd"/><rect x="500" y="326" width="530" height="10" fill="#dca6c0" opacity="0.9"/><rect x="100" y="327" width="420" height="8" fill="#e6b4bc" opacity="0.9"/></g>
<path d="M98.0 349.0C98.3 347.0 98.0 342.3 100.0 340.0C102.0 337.7 76.7 335.8 110.0 335.0C143.3 334.2 234.2 335.2 300.0 335.0C365.8 334.8 438.3 334.2 505.0 334.0C571.7 333.8 634.2 333.7 700.0 334.0C765.8 334.3 848.0 335.7 900.0 336.0C952.0 336.3 993.3 333.3 1012.0 336.0C1030.7 338.7 1164.3 349.3 1012.0 352.0C859.7 354.7 250.3 352.5 98.0 352.0C-54.3 351.5 97.7 351.0 98.0 349.0Z" fill="#8682bc" />
<rect x="520" y="334" width="510" height="16" fill="#7f8fd0" opacity="0.55" filter="url(#b2)"/>
<path d="M800.0 346.0C808.3 344.0 833.3 343.3 850.0 342.0C866.7 340.7 883.3 339.3 900.0 338.0C916.7 336.7 935.8 336.3 950.0 334.0C964.2 331.7 974.7 326.7 985.0 324.0C995.3 321.3 1007.5 312.7 1012.0 318.0C1016.5 323.3 1047.3 350.0 1012.0 356.0C976.7 362.0 835.3 355.7 800.0 354.0C764.7 352.3 791.7 348.0 800.0 346.0Z" fill="#627a6a" filter="url(#b1)"/>
<path d="M960.0 334.0C963.3 329.0 976.3 325.3 985.0 322.0C993.7 318.7 1007.5 307.3 1012.0 314.0C1016.5 320.7 1015.7 354.3 1012.0 362.0C1008.3 369.7 997.8 361.7 990.0 360.0C982.2 358.3 970.0 356.3 965.0 352.0C960.0 347.7 956.7 339.0 960.0 334.0Z" fill="#3e5c3a" />
<path d="M650.0 349.0C647.5 348.0 660.0 343.0 665.0 343.0C670.0 343.0 682.5 348.0 680.0 349.0C677.5 350.0 652.5 350.0 650.0 349.0Z" fill="#5a7882" />
<path d="M680.0 349.0C670.0 347.7 692.5 341.5 700.0 341.0C707.5 340.5 715.0 344.7 725.0 346.0C735.0 347.3 767.5 348.5 760.0 349.0C752.5 349.5 690.0 350.3 680.0 349.0Z" fill="#607c80" />
<rect x="922" y="340" width="7" height="5" fill="#e9e4dc"/>
<rect x="930" y="342" width="7" height="5" fill="#e9e4dc"/>
<rect x="961" y="344" width="7" height="5" fill="#e9e4dc"/>
<rect x="900" y="343" width="7" height="5" fill="#e9e4dc"/>
<rect x="880" y="345" width="7" height="5" fill="#e9e4dc"/>
<clipPath id="seaclip"><rect x="0" y="349" width="1009" height="156"/></clipPath><g clip-path="url(#seaclip)">
<rect x="0" y="349" width="1009" height="156" fill="url(#sea)"/>
<rect x="0" y="349" width="1009" height="156" fill="url(#seaR)"/>
<g filter="url(#b16)"><path d="M640.0 352.0C650.0 349.2 728.3 351.3 760.0 353.0C791.7 354.7 810.0 357.5 830.0 362.0C850.0 366.5 848.3 374.5 880.0 380.0C911.7 385.5 996.7 371.7 1020.0 395.0C1043.3 418.3 1090.0 499.2 1020.0 520.0C950.0 540.8 661.7 533.3 600.0 520.0C538.3 506.7 623.3 460.0 650.0 440.0C676.7 420.0 751.7 411.7 760.0 400.0C768.3 388.3 720.0 378.0 700.0 370.0C680.0 362.0 630.0 354.8 640.0 352.0Z" fill="#4296b4" opacity="0.8"/><path d="M860.0 440.0C896.7 423.3 993.3 406.7 1020.0 420.0C1046.7 433.3 1056.7 503.3 1020.0 520.0C983.3 536.7 826.7 533.3 800.0 520.0C773.3 506.7 823.3 456.7 860.0 440.0Z" fill="#266896" opacity="0.75"/></g>
<g filter="url(#b4)"><path d="M780.0 354.0C793.3 353.0 840.0 356.0 860.0 360.0C880.0 364.0 896.7 372.7 900.0 378.0C903.3 383.3 893.3 391.7 880.0 392.0C866.7 392.3 836.7 384.3 820.0 380.0C803.3 375.7 786.7 370.3 780.0 366.0C773.3 361.7 766.7 355.0 780.0 354.0Z" fill="#96d6d8" opacity="0.9"/><path d="M800.0 358.0C807.5 357.3 835.7 358.7 850.0 362.0C864.3 365.3 881.7 373.7 886.0 378.0C890.3 382.3 883.7 388.3 876.0 388.0C868.3 387.7 851.8 379.7 840.0 376.0C828.2 372.3 811.7 369.0 805.0 366.0C798.3 363.0 792.5 358.7 800.0 358.0Z" fill="#e2ece8" opacity="0.85"/></g>
<path d="M-20.0 349.0C90.0 343.0 536.7 345.2 640.0 349.0C743.3 352.8 656.7 366.8 600.0 372.0C543.3 377.2 403.3 377.8 300.0 380.0C196.7 382.2 33.3 390.2 -20.0 385.0C-73.3 379.8 -130.0 355.0 -20.0 349.0Z" fill="#0a2052" filter="url(#b8)" opacity="0.9"/>
<g filter="url(#rag2)">
<g filter="url(#b4)"><path d="M-20.0 400.0C16.7 395.3 126.7 397.3 200.0 396.0C273.3 394.7 383.3 390.0 420.0 392.0C456.7 394.0 456.7 404.0 420.0 408.0C383.3 412.0 273.3 413.3 200.0 416.0C126.7 418.7 16.7 426.7 -20.0 424.0C-56.7 421.3 -56.7 404.7 -20.0 400.0Z" fill="#10467c" opacity="0.8"/><path d="M-20.0 452.0C8.3 448.0 96.7 448.3 150.0 446.0C203.3 443.7 275.0 436.0 300.0 438.0C325.0 440.0 325.0 453.0 300.0 458.0C275.0 463.0 203.3 466.0 150.0 468.0C96.7 470.0 8.3 472.7 -20.0 470.0C-48.3 467.3 -48.3 456.0 -20.0 452.0Z" fill="#0e4072" opacity="0.85"/><path d="M-20.0 478.0C0.0 469.7 56.7 470.7 100.0 470.0C143.3 469.3 203.3 472.0 240.0 474.0C276.7 476.0 305.0 474.3 320.0 482.0C335.0 489.7 386.7 513.7 330.0 520.0C273.3 526.3 38.3 527.0 -20.0 520.0C-78.3 513.0 -40.0 486.3 -20.0 478.0Z" fill="#68acc6" opacity="0.95"/><path d="M310.0 480.0C318.3 472.3 341.7 474.7 360.0 474.0C378.3 473.3 400.0 473.7 420.0 476.0C440.0 478.3 456.7 484.3 480.0 488.0C503.3 491.7 533.3 497.0 560.0 498.0C586.7 499.0 626.7 490.3 640.0 494.0C653.3 497.7 695.0 515.7 640.0 520.0C585.0 524.3 365.0 526.7 310.0 520.0C255.0 513.3 301.7 487.7 310.0 480.0Z" fill="#165288" opacity="0.95"/><path d="M520.0 462.0C523.3 459.0 546.7 456.3 560.0 456.0C573.3 455.7 585.0 458.0 600.0 460.0C615.0 462.0 650.0 465.3 650.0 468.0C650.0 470.7 618.3 475.0 600.0 476.0C581.7 477.0 553.3 476.3 540.0 474.0C526.7 471.7 516.7 465.0 520.0 462.0Z" fill="#18588c" opacity="0.9"/><path d="M770.0 412.0C775.0 409.0 801.7 406.3 820.0 404.0C838.3 401.7 866.7 398.0 880.0 398.0C893.3 398.0 905.0 401.3 900.0 404.0C895.0 406.7 868.3 411.0 850.0 414.0C831.7 417.0 803.3 422.3 790.0 422.0C776.7 421.7 765.0 415.0 770.0 412.0Z" fill="#1e6c9e" opacity="0.85"/></g>
<path d="M700.0 470.0C703.3 464.3 766.7 455.3 800.0 452.0C833.3 448.7 864.7 452.0 900.0 450.0C935.3 448.0 993.3 436.7 1012.0 440.0C1030.7 443.3 1030.7 464.0 1012.0 470.0C993.3 476.0 938.7 473.3 900.0 476.0C861.3 478.7 813.3 487.0 780.0 486.0C746.7 485.0 696.7 475.7 700.0 470.0Z" fill="#2c82ac" filter="url(#b8)" opacity="0.6"/>
</g>
</g>
<path d="M740.0 351.5C745.0 350.8 774.7 351.9 820.0 352.0C865.3 352.1 980.0 345.0 1012.0 352.0C1044.0 359.0 1020.7 388.0 1012.0 394.0C1003.3 400.0 977.8 390.2 960.0 388.0C942.2 385.8 917.3 383.7 905.0 381.0C892.7 378.3 896.8 375.2 886.0 372.0C875.2 368.8 856.0 364.7 840.0 362.0C824.0 359.3 806.7 357.8 790.0 356.0C773.3 354.2 735.0 352.2 740.0 351.5Z" fill="#f0d8b6" />
<path d="M880.0 370.0C885.0 368.7 908.0 373.7 930.0 376.0C952.0 378.3 998.3 380.7 1012.0 384.0C1025.7 387.3 1022.3 395.0 1012.0 396.0C1001.7 397.0 968.7 392.0 950.0 390.0C931.3 388.0 911.7 387.3 900.0 384.0C888.3 380.7 875.0 371.3 880.0 370.0Z" fill="#e2c4a0" filter="url(#b2)"/>
<path d="M850.0 352.0C868.7 351.2 985.0 351.0 1012.0 352.0C1039.0 353.0 1030.7 357.2 1012.0 358.0C993.3 358.8 927.0 358.0 900.0 357.0C873.0 356.0 831.3 352.8 850.0 352.0Z" fill="#c4ba96" filter="url(#b1)" opacity="0.7"/>
<path d="M985.0 350.0C988.3 348.0 1007.5 346.0 1012.0 348.0C1016.5 350.0 1015.3 360.0 1012.0 362.0C1008.7 364.0 996.5 362.0 992.0 360.0C987.5 358.0 981.7 352.0 985.0 350.0Z" fill="#46643e" />
<g filter="url(#b1)"><path d="M700.0 352.0C713.3 352.7 756.7 353.7 780.0 356.0C803.3 358.3 823.7 362.3 840.0 366.0C856.3 369.7 870.0 374.0 878.0 378.0C886.0 382.0 886.3 388.0 888.0 390.0" fill="none" stroke="#f7f1e7" stroke-width="4" stroke-linecap="round" stroke-linejoin="round" opacity="0.95"/><path d="M640.0 352.0C653.3 352.7 695.0 353.7 720.0 356.0C745.0 358.3 774.2 363.0 790.0 366.0C805.8 369.0 813.3 371.3 815.0 374.0C816.7 376.7 802.5 380.7 800.0 382.0" fill="none" stroke="#f0f0ec" stroke-width="3" stroke-linecap="round" stroke-linejoin="round" opacity="0.8"/></g>
<g filter="url(#rag2)">
<g filter="url(#b1)"><path d="M17.0 398.0C24.2 397.7 44.5 396.5 60.0 396.0C75.5 395.5 101.7 395.2 110.0 395.0" fill="none" stroke="#d6deec" stroke-width="3" stroke-linecap="round" stroke-linejoin="round" opacity="0.9"/><path d="M245.0 393.0C247.8 392.8 259.2 392.2 262.0 392.0" fill="none" stroke="#d6deec" stroke-width="2.5" stroke-linecap="round" stroke-linejoin="round" opacity="0.9"/><path d="M350.0 392.0C355.0 391.7 370.8 390.0 380.0 390.0C389.2 390.0 400.8 391.7 405.0 392.0" fill="none" stroke="#d6deec" stroke-width="2.5" stroke-linecap="round" stroke-linejoin="round" opacity="0.8"/><path d="M0.0 441.0C10.0 440.2 43.7 437.3 60.0 436.0C76.3 434.7 75.2 434.7 98.0 433.0C120.8 431.3 164.2 428.5 197.0 426.0C229.8 423.5 267.8 420.3 295.0 418.0C322.2 415.7 341.5 413.3 360.0 412.0C378.5 410.7 398.3 410.3 406.0 410.0" fill="none" stroke="#e4e8f4" stroke-width="11" stroke-linecap="round" stroke-linejoin="round" opacity="1"/></g>
<path d="M0.0 448.0C10.0 447.3 40.0 445.3 60.0 444.0C80.0 442.7 110.0 440.7 120.0 440.0" fill="none" stroke="#bec6e2" stroke-width="7" stroke-linecap="round" stroke-linejoin="round" opacity="0.9" filter="url(#b2)"/>
<g filter="url(#b1)"><path d="M430.0 412.0C438.3 411.5 467.5 409.8 480.0 409.0C492.5 408.2 491.7 408.7 505.0 407.0C518.3 405.3 543.5 401.2 560.0 399.0C576.5 396.8 582.3 396.0 604.0 394.0C625.7 392.0 664.0 389.0 690.0 387.0C716.0 385.0 741.7 383.8 760.0 382.0C778.3 380.2 793.3 377.0 800.0 376.0" fill="none" stroke="#f5f7fb" stroke-width="7" stroke-linecap="round" stroke-linejoin="round" opacity="1"/><path d="M55.0 476.0C70.8 475.3 120.8 473.0 150.0 472.0C179.2 471.0 205.8 471.0 230.0 470.0C254.2 469.0 275.8 468.3 295.0 466.0C314.2 463.7 332.7 458.7 345.0 456.0C357.3 453.3 356.5 451.0 369.0 450.0C381.5 449.0 403.2 450.7 420.0 450.0C436.8 449.3 455.8 447.0 470.0 446.0C484.2 445.0 499.2 444.3 505.0 444.0" fill="none" stroke="#f7f9fb" stroke-width="19" stroke-linecap="round" stroke-linejoin="round" opacity="0.96"/></g>
<path d="M80.0 488.0C95.0 487.3 140.0 484.7 170.0 484.0C200.0 483.3 245.0 484.0 260.0 484.0" fill="none" stroke="#f0f6fa" stroke-width="6" stroke-linecap="round" stroke-linejoin="round" opacity="0.7" filter="url(#b2)"/>
<g filter="url(#b1)"><path d="M505.0 446.0C509.2 447.7 519.2 455.0 530.0 456.0C540.8 457.0 557.7 453.7 570.0 452.0C582.3 450.3 592.3 448.3 604.0 446.0C615.7 443.7 629.8 440.3 640.0 438.0C650.2 435.7 660.8 433.0 665.0 432.0" fill="none" stroke="#f9fbfd" stroke-width="26" stroke-linecap="round" stroke-linejoin="round" opacity="1"/><path d="M664.0 430.0C670.0 428.3 687.3 422.3 700.0 420.0C712.7 417.7 728.0 417.0 740.0 416.0C752.0 415.0 766.7 414.3 772.0 414.0" fill="none" stroke="#f9fbfd" stroke-width="26" stroke-linecap="round" stroke-linejoin="round" opacity="1"/><path d="M662.0 424.0C666.7 421.7 680.3 412.7 690.0 410.0C699.7 407.3 709.8 408.3 720.0 408.0C730.2 407.7 741.7 407.3 751.0 408.0C760.3 408.7 771.8 411.3 776.0 412.0" fill="none" stroke="#f9fbfd" stroke-width="18" stroke-linecap="round" stroke-linejoin="round" opacity="1"/><path d="M776.0 408.0C780.2 406.8 788.7 403.5 801.0 401.0C813.3 398.5 836.0 394.8 850.0 393.0C864.0 391.2 879.2 390.5 885.0 390.0" fill="none" stroke="#f9fbfd" stroke-width="10" stroke-linecap="round" stroke-linejoin="round" opacity="1"/><path d="M505.0 446.0C506.2 450.0 509.2 464.3 512.0 470.0C514.8 475.7 520.3 478.3 522.0 480.0" fill="none" stroke="#f7f9fb" stroke-width="18" stroke-linecap="round" stroke-linejoin="round" opacity="1"/></g>
<g filter="url(#b2)"><path d="M-5.0 496.0C5.8 495.2 34.2 492.2 60.0 491.0C85.8 489.8 118.3 489.0 150.0 489.0C181.7 489.0 221.7 489.5 250.0 491.0C278.3 492.5 308.3 496.8 320.0 498.0" fill="none" stroke="#e8f2f6" stroke-width="9" stroke-linecap="round" stroke-linejoin="round" opacity="0.85"/><path d="M420.0 466.0C428.3 465.0 453.3 459.7 470.0 460.0C486.7 460.3 511.7 466.7 520.0 468.0" fill="none" stroke="#d6e8ee" stroke-width="5" stroke-linecap="round" stroke-linejoin="round" opacity="0.8"/><path d="M300.0 444.0C310.0 443.0 340.0 439.0 360.0 438.0C380.0 437.0 410.0 438.0 420.0 438.0" fill="none" stroke="#dcecf0" stroke-width="5" stroke-linecap="round" stroke-linejoin="round" opacity="0.8"/></g>
</g>
<path d="M171 348L175 360L169.8 360Z" fill="#cfc4d2"/><path d="M168.6 360.5H175.4L174.2 363H169.4Z" fill="#e8e8f0"/>
<path d="M229 346L236 370L226.9 370Z" fill="#f4f2f4"/><path d="M224.8 370.5H236.7L234.6 373H226.2Z" fill="#e8e8f0"/>
<path d="M223 359L219 373H227Z M248 364L240 373H251Z" fill="#f1ecef"/>
<path d="M355 351L364 379L352.3 379Z" fill="#f4f2f4"/><path d="M349.6 379.5H364.9L362.2 382H351.4Z" fill="#e8e8f0"/>
<path d="M571 338L582 352L567.7 352Z" fill="#dfe6f2"/><path d="M564.4 352.5H583.1L579.8 355H566.6Z" fill="#e8e8f0"/>
<path d="M890 499H911M914 499H936M940 499H996M1000 499H1008" stroke="#cfe0ee" stroke-width="4.5" stroke-dasharray="2.2 1.1" opacity="0.75" fill="none"/>
</svg>
<g transform="translate(91.6,564.0) scale(0.985)">
<rect x="0" y="-30" width="354.7" height="303.6" fill="#000" opacity="0.3" filter="url(#sh)" transform="translate(2,2)"/>
<rect x="0" y="-30" width="354.7" height="303.6" fill="#533"/>
<rect x="0" y="-30" width="354.7" height="30" fill="#322"/>
<rect x="10" y="-20" width="10" height="10" fill="#6b6b6b"/>
<text x="30" y="-10" font-size="14" fill="#999" stroke="#999" stroke-width="0.28">Tiled Upscaler Script</text>
<circle cx="10" cy="14.0" r="4" fill="#778"/>
<text x="20.8" y="19.4" font-size="12" fill="#AAA" stroke="#AAA" stroke-width="0.28">script</text>
<circle cx="344.7" cy="14.0" r="4" fill="#70c466" stroke="#000" stroke-width="1"/>
<text x="334.7" y="19.4" font-size="12" fill="#AAA" text-anchor="end" stroke="#AAA" stroke-width="0.28">SCRIPT</text>
<rect x="15" y="26" width="323.09999999999997" height="20" rx="10" ry="10" fill="#222" stroke="#666" stroke-width="1"/>
<path d="M31 31L21 36L31 41Z M322.09999999999997 31L332.09999999999997 36L322.09999999999997 41Z" fill="#DDD"/>
<text x="35.8" y="40" font-size="12" fill="#999" stroke="#999" stroke-width="0.28">upscale_by</text>
<text x="303.09999999999997" y="40" font-size="12" fill="#DDD" text-anchor="end" stroke="#DDD" stroke-width="0.28">1.50</text>
<rect x="15" y="50" width="323.09999999999997" height="20" rx="10" ry="10" fill="#222" stroke="#666" stroke-width="1"/>
<path d="M31 55L21 60L31 65Z M322.09999999999997 55L332.09999999999997 60L322.09999999999997 65Z" fill="#DDD"/>
<text x="35.8" y="64" font-size="12" fill="#999" stroke="#999" stroke-width="0.28">tile_size</text>
<text x="303.09999999999997" y="64" font-size="12" fill="#DDD" text-anchor="end" stroke="#DDD" stroke-width="0.28">640</text>
<rect x="15" y="74" width="323.09999999999997" height="20" rx="10" ry="10" fill="#222" stroke="#666" stroke-width="1"/>
<path d="M31 79L21 84L31 89Z M322.09999999999997 79L332.09999999999997 84L322.09999999999997 89Z" fill="#DDD"/>
<text x="35.8" y="88" font-size="12" fill="#999" stroke="#999" stroke-width="0.28">tiling_strategy</text>
<text x="303.09999999999997" y="88" font-size="12" fill="#DDD" text-anchor="end" stroke="#DDD" stroke-width="0.28">random strict</text>
<rect x="15" y="98" width="323.09999999999997" height="20" rx="10" ry="10" fill="#222" stroke="#666" stroke-width="1"/>
<path d="M31 103L21 108L31 113Z M322.09999999999997 103L332.09999999999997 108L322.09999999999997 113Z" fill="#DDD"/>
<text x="35.8" y="112" font-size="12" fill="#999" stroke="#999" stroke-width="0.28">tiling_steps</text>
<text x="303.09999999999997" y="112" font-size="12" fill="#DDD" text-anchor="end" stroke="#DDD" stroke-width="0.28">12</text>
<rect x="15" y="122" width="323.09999999999997" height="20" rx="10" ry="10" fill="#222" stroke="#666" stroke-width="1"/>
<path d="M31 127L21 132L31 137Z M322.09999999999997 127L332.09999999999997 132L322.09999999999997 137Z" fill="#DDD"/>
<text x="35.8" y="136" font-size="12" fill="#999" stroke="#999" stroke-width="0.28">seed</text>
<text x="303.09999999999997" y="136" font-size="12" fill="#DDD" text-anchor="end" stroke="#DDD" stroke-width="0.28">444264914855361</text>
<rect x="15" y="146" width="323.09999999999997" height="20" fill="#222" stroke="#666" stroke-width="1"/>
<g transform="translate(74.58,149.80) scale(0.9)"><path d="M6.5 0.3L12.3 3.2V9.6L6.5 12.8L0.7 9.6V3.2Z" fill="#e9e9ee"/><path d="M6.5 6.2L12.3 3.2V9.6L6.5 12.8Z" fill="#c9c9d2"/><path d="M6.5 6.2L0.7 3.2V9.6L6.5 12.8Z" fill="#dcdce3"/><circle cx="6.5" cy="3.2" r="1.1" fill="#d33"/><circle cx="3.6" cy="8" r="0.8" fill="#555"/><circle cx="9" cy="7" r="0.7" fill="#555"/><circle cx="10.4" cy="9.4" r="0.7" fill="#555"/></g>
<text x="90.52" y="160" font-size="12" fill="#DDD" stroke="#DDD" stroke-width="0.28">Randomize /</text>
<g transform="translate(163.26,149.30)" fill="none" stroke="#13c213" stroke-width="3" stroke-linejoin="round" stroke-linecap="butt"><path d="M4.6 5.4L6.2 2.4L8.2 5.6M9.4 7.6L10.8 10.4H7.4M5.2 10.6H1.6L3.2 7.6"/><path d="M8.6 2.8L9.6 6.6L6.4 5.8Z M4.6 8.2L6.4 10.6L4.4 12.6Z M0.8 5.6L4.4 5.2L3 8.2Z" fill="#13c213" stroke-width="0.6"/></g>
<text x="179.70" y="160" font-size="12" fill="#DDD" stroke="#DDD" stroke-width="0.28">444264914855361</text>
<rect x="15" y="170" width="323.09999999999997" height="20" rx="10" ry="10" fill="#222" stroke="#666" stroke-width="1"/>
<path d="M31 175L21 180L31 185Z M322.09999999999997 175L332.09999999999997 180L322.09999999999997 185Z" fill="#DDD"/>
<text x="35.8" y="184" font-size="12" fill="#999" stroke="#999" stroke-width="0.28">denoise</text>
<text x="303.09999999999997" y="184" font-size="12" fill="#DDD" text-anchor="end" stroke="#DDD" stroke-width="0.28">0.56</text>
<rect x="15" y="194" width="323.09999999999997" height="20" rx="10" ry="10" fill="#222" stroke="#666" stroke-width="1"/>
<circle cx="323.09999999999997" cy="204" r="7.2" fill="#89A"/>
<text x="30.8" y="208" font-size="12" fill="#999" stroke="#999" stroke-width="0.28">use_controlnet</text>
<text x="313.09999999999997" y="208" font-size="12" fill="#DDD" text-anchor="end" stroke="#DDD" stroke-width="0.28">true</text>
<rect x="15" y="218" width="323.09999999999997" height="20" rx="10" ry="10" fill="#222" stroke="#666" stroke-width="1"/>
<path d="M31 223L21 228L31 233Z M322.09999999999997 223L332.09999999999997 228L322.09999999999997 233Z" fill="#DDD"/>
<text x="35.8" y="232" font-size="12" fill="#999" stroke="#999" stroke-width="0.28">tile_controlnet</text>
<text x="303.09999999999997" y="232" font-size="12" fill="#DDD" text-anchor="end" stroke="#DDD" stroke-width="0.28">v11\control_v11f1e_sd15_tile.pth</text>
<rect x="15" y="242" width="323.09999999999997" height="20" rx="10" ry="10" fill="#222" stroke="#666" stroke-width="1"/>
<path d="M31 247L21 252L31 257Z M322.09999999999997 247L332.09999999999997 252L322.09999999999997 257Z" fill="#DDD"/>
<text x="35.8" y="256" font-size="12" fill="#999" stroke="#999" stroke-width="0.28">strength</text>
<text x="303.09999999999997" y="256" font-size="12" fill="#DDD" text-anchor="end" stroke="#DDD" stroke-width="0.28">1.00</text>
</g>
</svg></body></html>
